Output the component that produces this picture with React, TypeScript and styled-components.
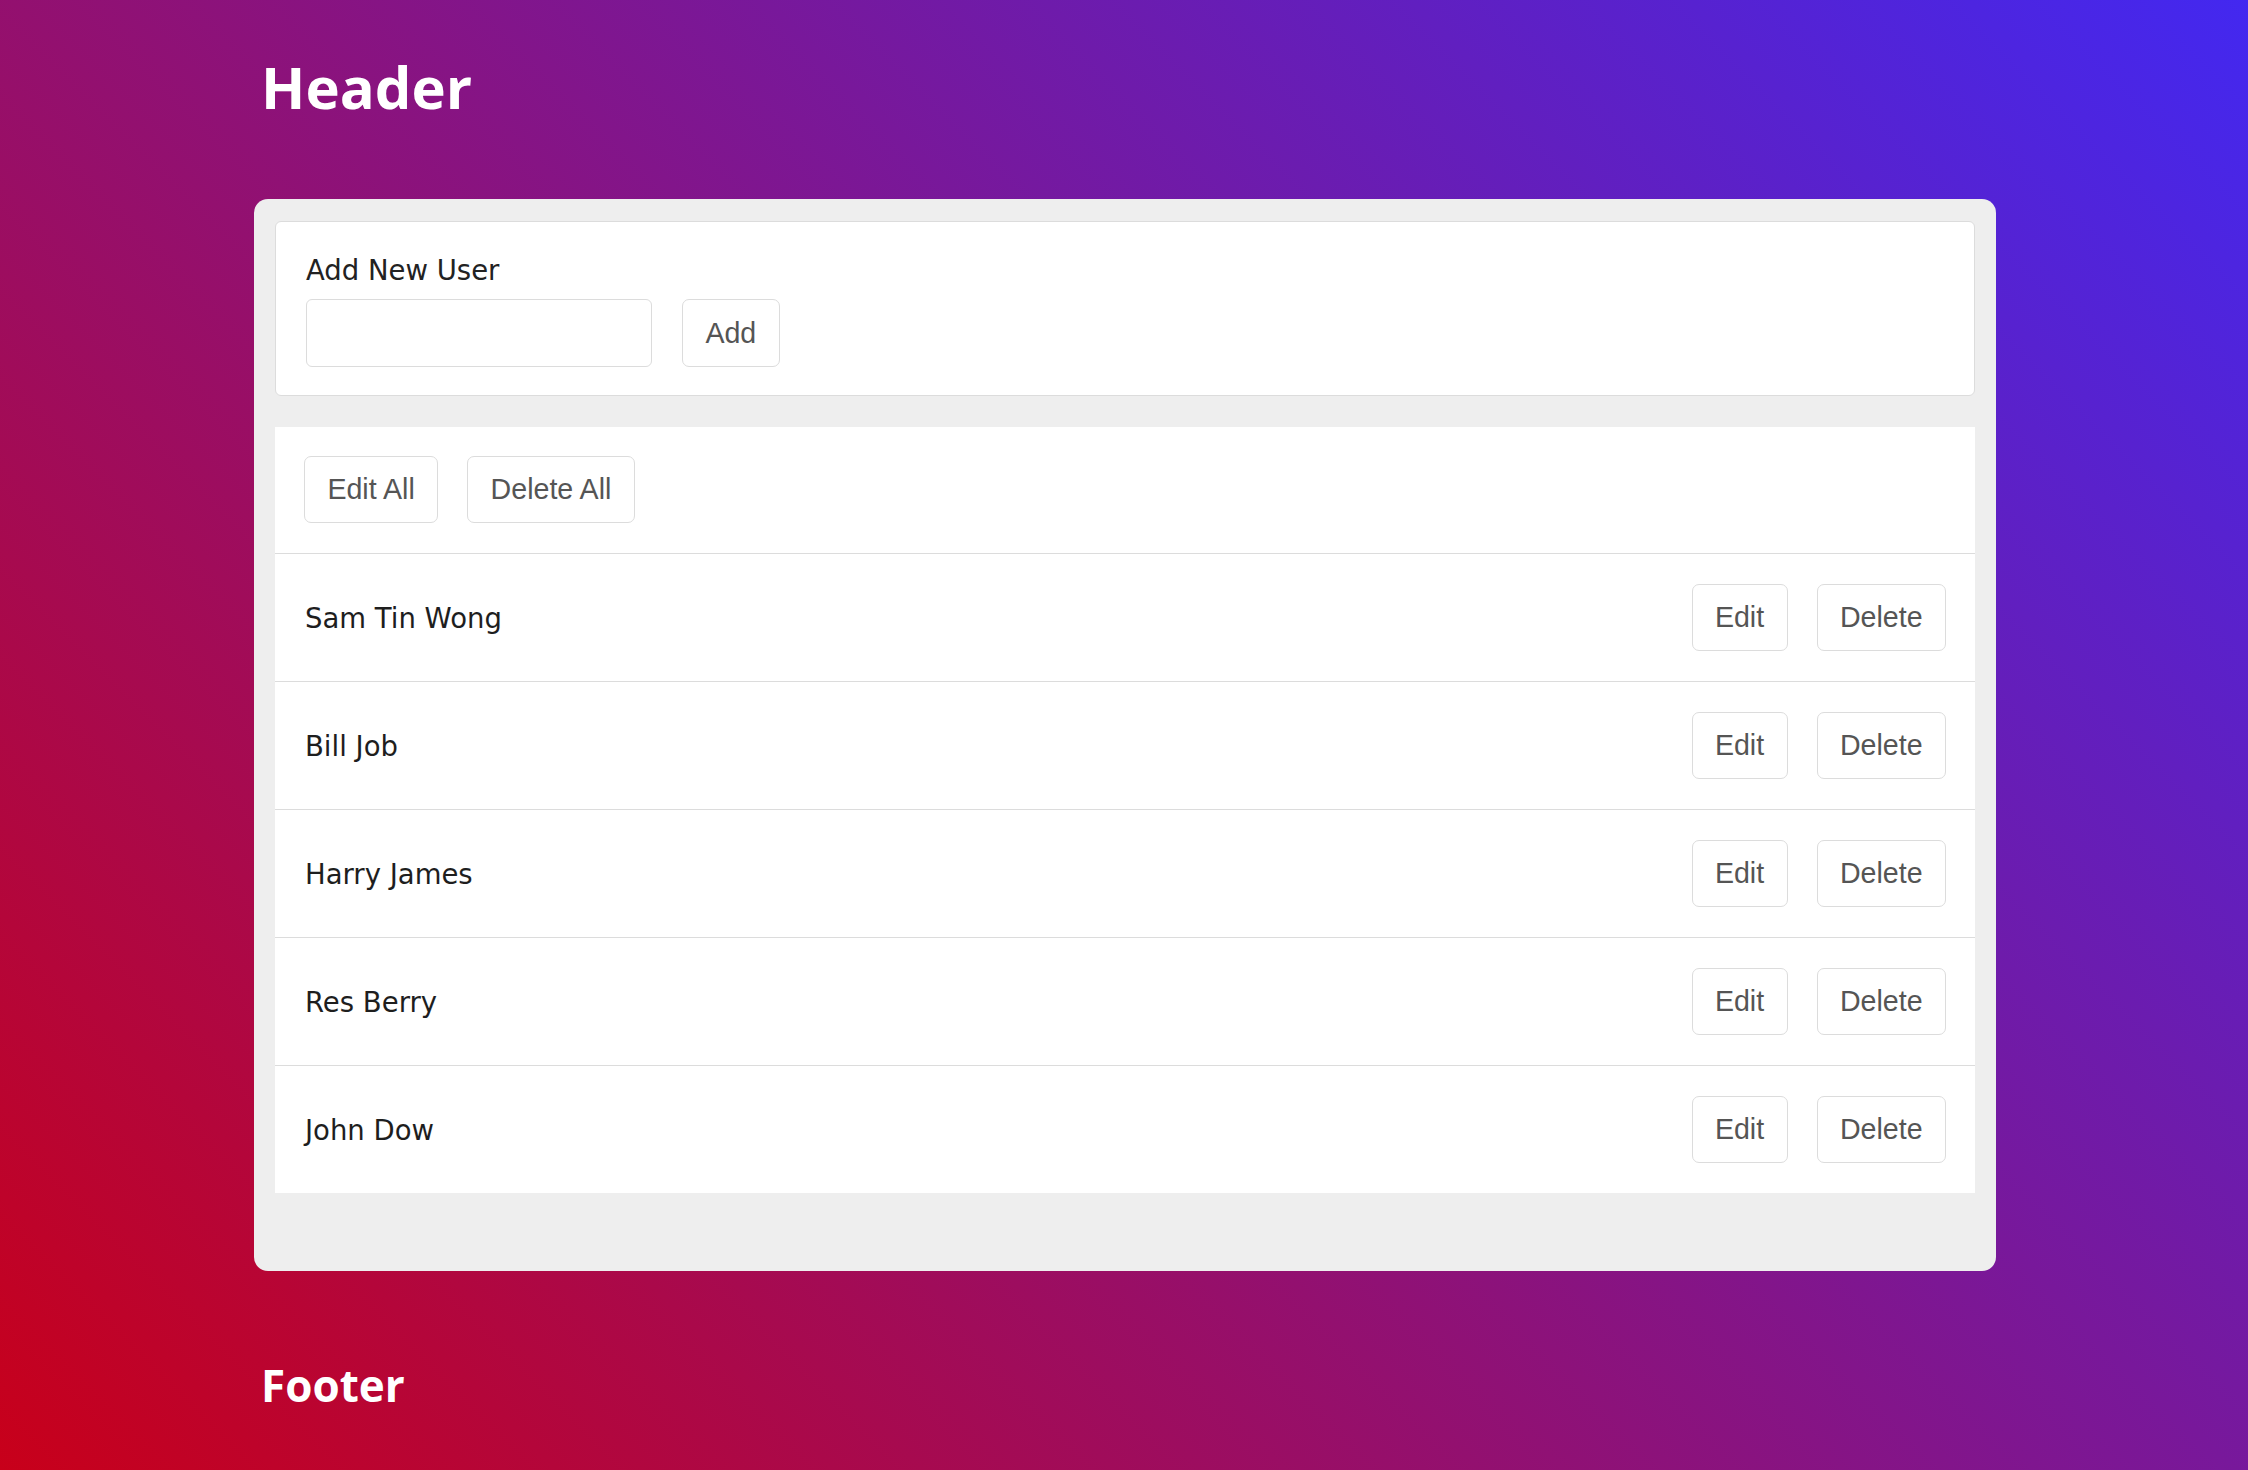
import React from "react";
import styled, { createGlobalStyle } from "styled-components";

const GlobalStyle = createGlobalStyle`
  html, body {
    margin: 0;
    padding: 0;
  }
  body {
    background: #86148a;
    font-family: "DejaVu Sans", "Open Sans", sans-serif;
  }
  * { box-sizing: border-box; }
`;

const Page = styled.div`
  min-height: 100vh;
  background: linear-gradient(45deg, #c8001a 0%, #4328f0 100%);
  padding: 58px 0 50px;
`;

const Container = styled.div`
  width: 1742px;
  margin-left: 254px;
  display: flex;
  flex-direction: column;
`;

const Title = styled.h1<{ $size: number }>`
  margin: 0;
  padding-left: 7px;
  font-family: "Open Sans", "DejaVu Sans", sans-serif;
  font-weight: 700;
  font-size: ${(p) => p.$size}px;
  line-height: 1;
  color: #ffffff;
`;

const Panel = styled.main`
  margin: 83px 0 92px;
  background: #eeeeee;
  border-radius: 14px;
  padding: 22px 21px 78px;
  display: flex;
  flex-direction: column;
  gap: 31px;
`;

const Card = styled.section`
  background: #ffffff;
  border: 1px solid #dcdcdc;
  border-radius: 6px;
  padding: 31px 30px 28px;
  display: flex;
  flex-direction: column;
  gap: 12px;
`;

const Label = styled.label`
  font-size: 27.5px;
  line-height: 34px;
  color: #222222;
`;

const AddRow = styled.div`
  display: flex;
  align-items: stretch;
  gap: 30px;
`;

const Input = styled.input`
  width: 346px;
  height: 68px;
  border: 1px solid #dcdcdc;
  border-radius: 6px;
  background: #ffffff;
  font-size: 26px;
  padding: 0 14px;
  outline: none;
`;

const Button = styled.button`
  height: 67px;
  padding: 0 22.4px;
  border: 1px solid #dcdcdc;
  border-radius: 7px;
  background: #ffffff;
  color: #555555;
  font-family: "Liberation Sans", Arial, sans-serif;
  font-size: 28.6px;
  line-height: 1;
  cursor: pointer;
  ${AddRow} & {
    height: auto;
  }
`;

const List = styled.section`
  background: #ffffff;
  display: flex;
  flex-direction: column;
`;

const Toolbar = styled.div`
  display: flex;
  gap: 29px;
  padding: 29px 29px 30px;
`;

const Row = styled.div`
  display: flex;
  align-items: center;
  justify-content: space-between;
  border-top: 1px solid #dcdcdc;
  padding: 30px 29px 30px 30px;
`;

const Name = styled.span`
  font-size: 27.5px;
  color: #1e1e1e;
`;

const Actions = styled.div`
  display: flex;
  gap: 29px;
`;

const users = ["Sam Tin Wong", "Bill Job", "Harry James", "Res Berry", "John Dow"];

export default function App() {
  return (
    <>
      <GlobalStyle />
      <Page>
        <Container>
          <Title $size={58}>Header</Title>
          <Panel>
            <Card>
              <Label>Add New User</Label>
              <AddRow>
                <Input type="text" />
                <Button>Add</Button>
              </AddRow>
            </Card>
            <List>
              <Toolbar>
                <Button>Edit All</Button>
                <Button>Delete All</Button>
              </Toolbar>
              {users.map((u) => (
                <Row key={u}>
                  <Name>{u}</Name>
                  <Actions>
                    <Button>Edit</Button>
                    <Button>Delete</Button>
                  </Actions>
                </Row>
              ))}
            </List>
          </Panel>
          <Title as="h2" $size={44}>
            Footer
          </Title>
        </Container>
      </Page>
    </>
  );
}
